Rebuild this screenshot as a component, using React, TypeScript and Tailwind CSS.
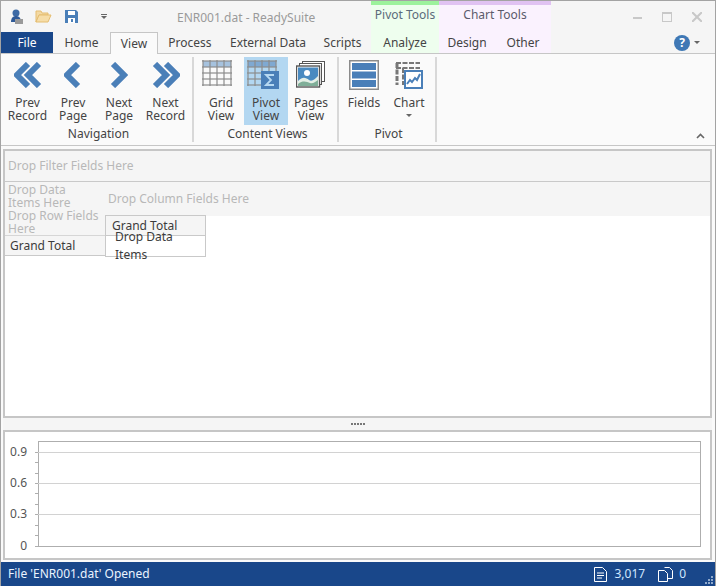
import React from 'react'

const BLUE = '#4a7fb8'
const GREY = '#8c8c8c'

function Chevron({ dir, double }: { dir: 'left' | 'right'; double?: boolean }) {
  const left = dir === 'left'
  const points = (x: number) =>
    left ? `${x + 11},2 ${x},13 ${x + 11},24` : `${x},2 ${x + 11},13 ${x},24`
  const width = double ? 28 : 18
  return (
    <svg width={width} height="26" viewBox={`0 0 ${width} 26`} fill="none" stroke={BLUE} strokeWidth="6">
      {double ? (
        <>
          <polyline points={points(3)} />
          <polyline points={points(14)} />
        </>
      ) : (
        <polyline points={points(3)} />
      )}
    </svg>
  )
}

function GridIcon({ header, sigma }: { header: string; sigma?: boolean }) {
  const xs = [1, 8, 15, 22, 29]
  const ys = [1, 7, 13, 19, 25]
  return (
    <svg width="38" height="30" viewBox="0 0 38 30">
      <rect x="1" y="1" width="28" height="6" fill={header} />
      {xs.map((x) => (
        <line key={x} x1={x} y1="0" x2={x} y2="26" stroke={GREY} strokeWidth="1.2" />
      ))}
      {ys.map((y) => (
        <line key={y} x1="0" y1={y} x2="30" y2={y} stroke={GREY} strokeWidth="1.2" />
      ))}
      {sigma && (
        <>
          <rect x="14" y="11" width="18" height="18" fill={BLUE} />
          <polyline points="27,15 19,15 24,20 19,25 27,25" fill="none" stroke="#b7d9f2" strokeWidth="1.8" />
        </>
      )}
    </svg>
  )
}

function PagesIcon() {
  return (
    <svg width="30" height="28" viewBox="0 0 30 28">
      <rect x="6.5" y="0.5" width="22" height="20" fill="white" stroke="#555" />
      <rect x="3.5" y="2.5" width="22" height="21" fill="white" stroke="#555" />
      <rect x="0.5" y="5" width="23" height="21" fill="white" stroke="#555" strokeWidth="1.4" />
      <rect x="2" y="6.5" width="20" height="18" fill="#4a8ac0" />
      <circle cx="11" cy="12" r="3" fill="white" />
      <path d="M2 20c5-5 8-3 11-1s6-1 9-4v10H2z" fill="#e4efe6" />
      <path d="M2 23c5-4 9-2 12-1s5-1 8-3v6H2z" fill="#7fae98" />
    </svg>
  )
}

function FieldsIcon() {
  return (
    <svg width="30" height="30" viewBox="0 0 30 30">
      <rect x="0.75" y="0.75" width="28.5" height="28.5" fill="white" stroke={GREY} strokeWidth="1.5" />
      <rect x="3" y="3" width="24" height="7" fill={BLUE} />
      <rect x="3" y="11.5" width="24" height="7" fill={BLUE} />
      <rect x="3" y="20" width="24" height="7" fill={BLUE} />
    </svg>
  )
}

function ChartIcon() {
  return (
    <svg width="30" height="30" viewBox="0 0 30 30">
      <g fill="none" stroke="#777" strokeWidth="2">
        <path d="M2 3h24" strokeDasharray="5 1.5" />
        <path d="M2 8h24" strokeDasharray="5 1.5" />
        <path d="M3 3v22" strokeWidth="3" strokeDasharray="5 1.5" />
        <path d="M9 8v17" strokeDasharray="5 1.5" />
      </g>
      <rect x="11" y="11" width="17" height="17" fill="white" stroke={BLUE} strokeWidth="2" />
      <polyline points="13,24 16,20 18,22 21,18 23,20 26,14" fill="none" stroke={BLUE} strokeWidth="2" />
    </svg>
  )
}

function RibbonButton({
  label,
  width,
  icon,
  active,
  caret,
}: {
  label: React.ReactNode
  width: string
  icon: React.ReactNode
  active?: boolean
  caret?: boolean
}) {
  return (
    <div className={`flex flex-col items-center h-[68px] ${width} ${active ? 'bg-[#b3d7f1]' : ''}`}>
      <div className="h-[36px] flex items-center justify-center">{icon}</div>
      <div className="text-center leading-[13px] mt-[3px]">{label}</div>
      {caret && <div className="mt-[5px] w-0 h-0 border-x-[3px] border-x-transparent border-t-[3px] border-t-[#666]" />}
    </div>
  )
}

function RibbonGroup({ title, className, children }: { title: string; className: string; children: React.ReactNode }) {
  return (
    <div className={`flex flex-col h-[85px] mt-[3px] border-r-2 border-[#d8d8d8] ${className}`}>
      <div className="flex">{children}</div>
      <div className="mt-auto text-center leading-[14px] pb-[1px]">{title}</div>
    </div>
  )
}

function Tab({ label, className }: { label: string; className: string }) {
  return <div className={`h-[21px] flex items-center justify-center ${className}`}>{label}</div>
}

function PivotArea() {
  return (
    <div className="flex-1 border-2 border-[#c6c6c6] bg-white flex flex-col min-h-0">
      <div className="h-[31px] bg-[#f5f5f5] border-b border-[#c9c9c9] flex items-center pl-[3px] text-[#b8b8b8]">
        Drop Filter Fields Here
      </div>
      <div className="flex text-[#b8b8b8]">
        <div className="w-[100px] shrink-0">
          <div className="bg-[#f5f5f5] pl-[3px] pr-[4px] leading-[13px] pt-[1px] h-[27px]">Drop Data Items Here</div>
          <div className="bg-[#f5f5f5] pl-[3px] pr-[4px] leading-[13px] h-[27px] border-b border-[#d6d6d6]">
            Drop Row Fields Here
          </div>
          <div className="h-[20px] bg-[#f5f5f5] border-b border-[#c9c9c9] flex items-center pl-[5px] text-[#3c3c3c]">
            Grand Total
          </div>
        </div>
        <div className="flex-1 flex flex-col">
          <div className="h-[34px] bg-[#f5f5f5] flex items-center pl-[3px]">Drop Column Fields Here</div>
          <div className="w-[101px] -mt-[1px] text-[#3c3c3c] border-x border-b border-[#c9c9c9]">
            <div className="h-[21px] bg-[#f5f5f5] border-y border-[#c9c9c9] flex items-center pl-[6px]">Grand Total</div>
            <div className="h-[20px] bg-white flex items-center pl-[9px]">Drop Data Items</div>
          </div>
        </div>
      </div>
    </div>
  )
}

function ChartPanel() {
  const minor = [451, 461, 472, 482, 492, 503, 513, 524, 534, 545]
  const grid = [451, 482, 513]
  const labels = [
    { y: 451, t: '0.9' },
    { y: 482, t: '0.6' },
    { y: 513, t: '0.3' },
    { y: 545, t: '0' },
  ]
  return (
    <div className="h-[130px] border-2 border-[#c6c6c6] bg-white">
      <svg width="706" height="126" viewBox="5 431 706 126">
        <rect x="38.5" y="440.5" width="662" height="105" fill="white" stroke="#aeaeae" />
        {grid.map((y) => (
          <line key={y} x1="38" x2="700" y1={y + 0.5} y2={y + 0.5} stroke="#d2d2d2" />
        ))}
        {minor.map((y) => (
          <line key={y} x1="35" x2="38" y1={y + 0.5} y2={y + 0.5} stroke="#aeaeae" />
        ))}
        {labels.map((l) => (
          <text key={l.t} x="27" y={l.y + 4} textAnchor="end" fontSize="12" fill="#555">
            {l.t}
          </text>
        ))}
      </svg>
    </div>
  )
}

export default function App() {
  return (
    <div className="w-[716px] h-[586px] flex flex-col bg-[#fafafa] border-x border-t border-[#a3a3a3] text-[12px] text-[#444] font-['Noto_Sans',sans-serif] overflow-hidden relative">
      {/* Title bar + tabs */}
      <div className="flex h-[53px] bg-[#f5f5f5] border-b border-[#c6c6c6] shrink-0">
        <div className="w-[370px] shrink-0 flex flex-col">
          <div className="h-[31px] flex items-center relative">
            <svg className="ml-[9px]" width="14" height="16" viewBox="0 0 14 16">
              <circle cx="6" cy="4" r="3.5" fill="#3d6aa5" />
              <path d="M1 13c0-4 2-6 5-6s5 2 5 6z" fill="#2f5a98" />
              <rect x="5" y="10" width="8" height="5" fill="#999" />
            </svg>
            <svg className="ml-[11px]" width="17" height="13" viewBox="0 0 17 13">
              <path d="M1 1h5l1 2h6v2H4L1 12z" fill="#f3d9a4" stroke="#e5bd70" />
              <path d="M4 5h12l-3 7H1z" fill="#f6dda8" stroke="#e5bd70" />
            </svg>
            <svg className="ml-[13px]" width="13" height="13" viewBox="0 0 13 13">
              <path d="M0 0h11l2 2v11H0z" fill={BLUE} />
              <rect x="3" y="1" width="7" height="4" fill="white" />
              <rect x="3" y="8" width="7" height="5" fill="white" />
              <rect x="6" y="9" width="2" height="3" fill={BLUE} />
            </svg>
            <div className="ml-[23px] flex flex-col items-center gap-[1px]">
              <div className="w-[6px] h-[1px] bg-[#666]" />
              <div className="w-0 h-0 border-x-[3px] border-x-transparent border-t-[3px] border-t-[#666]" />
            </div>
            <div className="absolute left-[176px] top-[8px] text-[#9a9a9a]">ENR001.dat - ReadySuite</div>
          </div>
          <div className="flex h-[21px]">
            <div className="w-[52px] h-[21px] bg-[#19478a] text-white flex items-center justify-center">File</div>
            <Tab label="Home" className="w-[57px]" />
            <div className="w-[48px] h-[22px] bg-[#fafafa] border-x border-t border-[#c6c6c6] flex items-center justify-center relative z-10">
              View
            </div>
            <Tab label="Process" className="w-[64px]" />
            <Tab label="External Data" className="w-[92px]" />
            <Tab label="Scripts" className="w-[57px]" />
          </div>
        </div>
        <div className="w-[68px] bg-[#eefeee] border-t-[4px] border-[#9cf29c] flex flex-col items-center shrink-0">
          <div className="h-[27px] pt-[1px] text-[#5b6b7b]">Pivot Tools</div>
          <Tab label="Analyze" className="w-full" />
        </div>
        <div className="w-[112px] bg-[#faf2fe] border-t-[4px] border-[#e0c2f2] flex flex-col shrink-0">
          <div className="h-[27px] pt-[1px] text-center text-[#5b5b6b]">Chart Tools</div>
          <div className="flex">
            <Tab label="Design" className="w-[56px]" />
            <Tab label="Other" className="w-[56px]" />
          </div>
        </div>
        <div className="flex-1 flex flex-col items-end">
          <div className="h-[31px] flex items-center pr-[13px] gap-[20px]">
            <div className="w-[9px] h-[2px] bg-[#c8c8c8] mt-[3px]" />
            <div className="w-[10px] h-[10px] border border-t-2 border-[#c8c8c8]" />
            <svg width="10" height="10" viewBox="0 0 10 10" stroke="#c8c8c8" strokeWidth="2">
              <line x1="0" y1="0" x2="10" y2="10" />
              <line x1="10" y1="0" x2="0" y2="10" />
            </svg>
          </div>
          <div className="h-[21px] flex items-center pr-[15px] gap-[4px]">
            <div className="w-[16px] h-[16px] rounded-full bg-[#3f78b5] text-white font-bold flex items-center justify-center">
              ?
            </div>
            <div className="w-0 h-0 border-x-[3px] border-x-transparent border-t-[3px] border-t-[#666]" />
          </div>
        </div>
      </div>

      {/* Ribbon */}
      <div className="flex h-[92px] bg-[#fafafa] border-b border-[#c6c6c6] shrink-0 relative">
        <RibbonGroup title="Navigation" className="w-[193px] pl-[4px]">
          <RibbonButton width="w-[45px]" icon={<Chevron dir="left" double />} label={<>Prev<br />Record</>} />
          <RibbonButton width="w-[46px]" icon={<Chevron dir="left" />} label={<>Prev<br />Page</>} />
          <RibbonButton width="w-[46px]" icon={<Chevron dir="right" />} label={<>Next<br />Page</>} />
          <RibbonButton width="w-[47px]" icon={<Chevron dir="right" double />} label={<>Next<br />Record</>} />
        </RibbonGroup>
        <RibbonGroup title="Content Views" className="w-[145px] pl-[4px]">
          <RibbonButton width="w-[46px]" icon={<GridIcon header="#a6c2de" />} label={<>Grid<br />View</>} />
          <RibbonButton width="w-[44px]" active icon={<GridIcon header="#7fa9d2" sigma />} label={<>Pivot<br />View</>} />
          <RibbonButton width="w-[46px]" icon={<PagesIcon />} label={<>Pages<br />View</>} />
        </RibbonGroup>
        <RibbonGroup title="Pivot" className="w-[98px] pl-[3px]">
          <RibbonButton width="w-[44px]" icon={<FieldsIcon />} label="Fields" />
          <RibbonButton width="w-[46px]" icon={<ChartIcon />} label="Chart" caret />
        </RibbonGroup>
        <svg className="absolute right-[10px] bottom-[6px]" width="9" height="6" viewBox="0 0 9 6" fill="none" stroke="#666" strokeWidth="1.6">
          <polyline points="1,5 4.5,1.5 8,5" />
        </svg>
      </div>

      {/* Panels */}
      <div className="flex-1 min-h-0 flex flex-col px-[2px] pt-[3px] pb-[2px] pr-[3px] bg-[#fafafa]">
        <PivotArea />
        <div className="h-[12px] bg-[#f5f5f5] flex items-center justify-center gap-[1px] shrink-0">
          {[0, 1, 2, 3, 4].map((i) => (
            <div key={i} className="w-[2px] h-[2px] bg-[#777]" />
          ))}
        </div>
        <ChartPanel />
      </div>

      {/* Status bar */}
      <div className="h-[24px] bg-[#19478a] text-[#eaf4ff] flex items-center pl-[7px] shrink-0 relative">
        <span>File 'ENR001.dat' Opened</span>
        <svg className="ml-auto" width="13" height="15" viewBox="0 0 13 15" fill="none" stroke="white">
          <path d="M.5.5h8l4 4v10H.5z" />
          <path d="M3 6h7M3 8.5h7M3 11h5" />
        </svg>
        <span className="ml-[7px] text-[#d2e8ff]">3,017</span>
        <svg className="ml-[13px]" width="15" height="15" viewBox="0 0 15 15" fill="none" stroke="white">
          <path d="M.5 3.5h6l3 3v8h-9z" />
          <path d="M6.5 .5h5l3 3v8h-5" />
        </svg>
        <span className="ml-[6px] mr-[29px] text-[#d2e8ff]">0</span>
        <svg className="absolute right-[1px] bottom-[1px]" width="9" height="9" viewBox="0 0 9 9" fill="#8fa9cc">
          <rect x="6" y="0" width="2" height="2" />
          <rect x="3" y="3" width="2" height="2" />
          <rect x="6" y="3" width="2" height="2" />
          <rect x="0" y="6" width="2" height="2" />
          <rect x="3" y="6" width="2" height="2" />
          <rect x="6" y="6" width="2" height="2" />
        </svg>
      </div>
    </div>
  )
}
